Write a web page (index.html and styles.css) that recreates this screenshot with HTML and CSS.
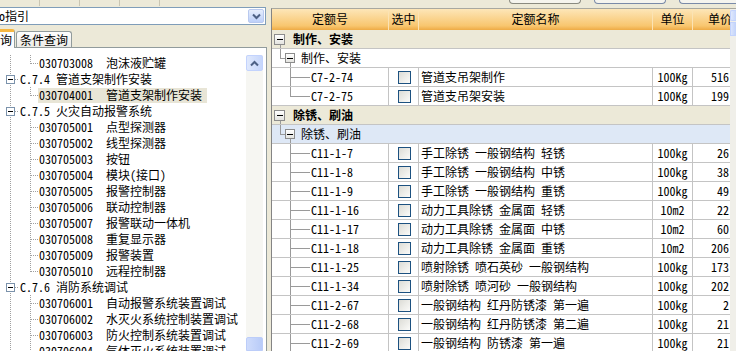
FILE: index.html
```html
<!DOCTYPE html>
<html lang="zh-CN">
<head>
<meta charset="utf-8">
<title>定额指引</title>
<link rel="stylesheet" href="styles.css">
</head>
<body>
<div class="app">
  <div class="left">
    <div class="ltop"><span class="tb"></span><span class="tb"></span><span class="tb"></span><span class="tb"></span></div>
    <div class="combo">
      <span class="combo-text">o指引</span>
      <span class="combo-btn"><svg width="9" height="7" viewBox="0 0 9 7"><path d="M1 1.5 L4.5 5 L8 1.5" fill="none" stroke="#4d6185" stroke-width="2"/></svg></span>
    </div>
    <div class="tabs">
      <span class="tab active">询</span>
      <span class="tab">条件查询</span>
      <span class="tabfill"></span>
    </div>
    <div class="tabpage">
      <div class="tree">
        <div class="tree-items">
          <div class="trow"><span class="l0"></span><span class="l1 last"></span><span class="code">030703008</span><span class="name">泡沫液贮罐</span></div>
          <div class="trow"><span class="l0 haschild"><span class="tbox"></span></span><span class="ptext">C.7.4 管道支架制作安装</span></div>
          <div class="trow"><span class="l0"></span><span class="l1 last"></span><span class="sel"><span class="code">030704001</span><span class="name">管道支架制作安装</span></span></div>
          <div class="trow"><span class="l0 haschild"><span class="tbox"></span></span><span class="ptext">C.7.5 火灾自动报警系统</span></div>
          <div class="trow"><span class="l0"></span><span class="l1"></span><span class="code">030705001</span><span class="name">点型探测器</span></div>
          <div class="trow"><span class="l0"></span><span class="l1"></span><span class="code">030705002</span><span class="name">线型探测器</span></div>
          <div class="trow"><span class="l0"></span><span class="l1"></span><span class="code">030705003</span><span class="name">按钮</span></div>
          <div class="trow"><span class="l0"></span><span class="l1"></span><span class="code">030705004</span><span class="name">模块(接口)</span></div>
          <div class="trow"><span class="l0"></span><span class="l1"></span><span class="code">030705005</span><span class="name">报警控制器</span></div>
          <div class="trow"><span class="l0"></span><span class="l1"></span><span class="code">030705006</span><span class="name">联动控制器</span></div>
          <div class="trow"><span class="l0"></span><span class="l1"></span><span class="code">030705007</span><span class="name">报警联动一体机</span></div>
          <div class="trow"><span class="l0"></span><span class="l1"></span><span class="code">030705008</span><span class="name">重复显示器</span></div>
          <div class="trow"><span class="l0"></span><span class="l1"></span><span class="code">030705009</span><span class="name">报警装置</span></div>
          <div class="trow"><span class="l0"></span><span class="l1 last"></span><span class="code">030705010</span><span class="name">远程控制器</span></div>
          <div class="trow"><span class="l0 haschild"><span class="tbox"></span></span><span class="ptext">C.7.6 消防系统调试</span></div>
          <div class="trow"><span class="l0"></span><span class="l1"></span><span class="code">030706001</span><span class="name">自动报警系统装置调试</span></div>
          <div class="trow"><span class="l0"></span><span class="l1"></span><span class="code">030706002</span><span class="name">水灭火系统控制装置调试</span></div>
          <div class="trow"><span class="l0"></span><span class="l1"></span><span class="code">030706003</span><span class="name">防火控制系统装置调试</span></div>
          <div class="trow"><span class="l0"></span><span class="l1"></span><span class="code">030706004</span><span class="name">气体灭火系统装置调试</span></div>
        </div>
        <div class="vscroll">
          <span class="sbtn"><svg width="9" height="7" viewBox="0 0 9 7"><path d="M1 5.5 L4.5 2 L8 5.5" fill="none" stroke="#4d6185" stroke-width="2"/></svg></span>
          <span class="strack"></span>
          <span class="sthumb"></span>
        </div>
      </div>
    </div>
  </div>
  <div class="splitter"></div>
  <div class="right">
    <div class="rtop"><span class="rb rb1"></span><span class="rb rb2"></span><span class="rb rb3"></span></div>
    <div class="grid">
      <div class="gtable">
        <div class="ghead">
          <span class="hc">定额号</span>
          <span class="hc">选中</span>
          <span class="hc">定额名称</span>
          <span class="hc">单位</span>
          <span class="hc">单价</span>
        </div>
        <div class="grow group"><span class="gbox"></span><span class="gtitle">制作、安装</span></div>
        <div class="grow sub"><span class="gbox small"></span><span class="stitle">制作、安装</span></div>
        <div class="grow data"><span class="c1"><span class="dl"></span>C7-2-74</span><span class="c2"><span class="chk"></span></span><span class="c3">管道支吊架制作</span><span class="c4">100Kg</span><span class="c5">516</span></div>
        <div class="grow data"><span class="c1"><span class="dl last"></span>C7-2-75</span><span class="c2"><span class="chk"></span></span><span class="c3">管道支吊架安装</span><span class="c4">100Kg</span><span class="c5">199</span></div>
        <div class="grow group"><span class="gbox"></span><span class="gtitle">除锈、刷油</span></div>
        <div class="grow sub cur"><span class="gbox small"></span><span class="stitle">除锈、刷油</span></div>
        <div class="grow data"><span class="c1"><span class="dl"></span>C11-1-7</span><span class="c2"><span class="chk"></span></span><span class="c3">手工除锈 一般钢结构 轻锈</span><span class="c4">100kg</span><span class="c5">26</span></div>
        <div class="grow data"><span class="c1"><span class="dl"></span>C11-1-8</span><span class="c2"><span class="chk"></span></span><span class="c3">手工除锈 一般钢结构 中锈</span><span class="c4">100kg</span><span class="c5">38</span></div>
        <div class="grow data"><span class="c1"><span class="dl"></span>C11-1-9</span><span class="c2"><span class="chk"></span></span><span class="c3">手工除锈 一般钢结构 重锈</span><span class="c4">100kg</span><span class="c5">49</span></div>
        <div class="grow data"><span class="c1"><span class="dl"></span>C11-1-16</span><span class="c2"><span class="chk"></span></span><span class="c3">动力工具除锈 金属面 轻锈</span><span class="c4">10m2</span><span class="c5">22</span></div>
        <div class="grow data"><span class="c1"><span class="dl"></span>C11-1-17</span><span class="c2"><span class="chk"></span></span><span class="c3">动力工具除锈 金属面 中锈</span><span class="c4">10m2</span><span class="c5">60</span></div>
        <div class="grow data"><span class="c1"><span class="dl"></span>C11-1-18</span><span class="c2"><span class="chk"></span></span><span class="c3">动力工具除锈 金属面 重锈</span><span class="c4">10m2</span><span class="c5">206</span></div>
        <div class="grow data"><span class="c1"><span class="dl"></span>C11-1-25</span><span class="c2"><span class="chk"></span></span><span class="c3">喷射除锈 喷石英砂 一般钢结构</span><span class="c4">100kg</span><span class="c5">173</span></div>
        <div class="grow data"><span class="c1"><span class="dl"></span>C11-1-34</span><span class="c2"><span class="chk"></span></span><span class="c3">喷射除锈 喷河砂 一般钢结构</span><span class="c4">100kg</span><span class="c5">202</span></div>
        <div class="grow data"><span class="c1"><span class="dl"></span>C11-2-67</span><span class="c2"><span class="chk"></span></span><span class="c3">一般钢结构 红丹防锈漆 第一遍</span><span class="c4">100kg</span><span class="c5">2</span></div>
        <div class="grow data"><span class="c1"><span class="dl"></span>C11-2-68</span><span class="c2"><span class="chk"></span></span><span class="c3">一般钢结构 红丹防锈漆 第二遍</span><span class="c4">100kg</span><span class="c5">21</span></div>
        <div class="grow data"><span class="c1"><span class="dl"></span>C11-2-69</span><span class="c2"><span class="chk"></span></span><span class="c3">一般钢结构 防锈漆 第一遍</span><span class="c4">100kg</span><span class="c5">21</span></div>
      </div>
      <div class="gscroll"><span class="gs-up"></span><span class="gs-thumb"></span></div>
    </div>
  </div>
</div>
</body>
</html>
```

FILE: styles.css
```css
* { box-sizing: border-box; }
html, body { margin: 0; padding: 0; }
body {
  width: 736px;
  height: 351px;
  overflow: hidden;
  background: #ece9d8;
  color: #000;
  font-family: "Noto Sans Mono CJK SC", "Noto Sans CJK SC", monospace;
  font-size: 12px;
  line-height: 16px;
}
.app { display: flex; height: 351px; }

/* ---------- left panel ---------- */
.left { width: 267px; display: flex; flex-direction: column; }
.ltop { height: 7px; display: flex; }
.tb { width: 40px; height: 6px; border-right: 1px solid #c9c5b3; }
.combo {
  height: 18px;
  display: flex;
  align-items: center;
  background: #fff;
  border: 1px solid #7f9db9;
  border-left: none;
  margin-right: 1px;
}
.combo-text { flex: 1; white-space: nowrap; overflow: hidden; margin-left: -1px; }
.combo-btn {
  width: 16px; height: 14px; margin-right: 1px;
  display: flex; align-items: center; justify-content: center;
  border: 1px solid #b9c9ef; border-radius: 2px;
  background: linear-gradient(#e6eefc, #bdd0f9);
}
.tabs { height: 22px; display: flex; align-items: flex-end; }
.tab {
  height: 16px;
  padding: 0 3px;
  border: 1px solid #919b9c;
  border-bottom: none;
  border-radius: 3px 3px 0 0;
  background: linear-gradient(#fefefe, #ecebe6);
  line-height: 15px;
  margin-left: 1px;
}
.tab.active {
  height: 19px;
  margin-left: 0;
  padding: 0 2px 0 0;
  border-left: none;
  border-top: 3px solid #f6b741;
  border-radius: 0 3px 0 0;
  background: #fcfcfe;
  line-height: 15px;
  position: relative;
  z-index: 1;
  margin-bottom: -1px;
}
.tabfill { flex: 1; }
.tabpage {
  flex: 1;
  background: #fff;
  border-top: 1px solid #919b9c;
  border-right: 1px solid #919b9c;
  padding-top: 6px;
  min-height: 0;
}
.tree { display: flex; height: 100%; }
.tree-items { flex: 1; overflow: hidden; padding-top: 1px; }
.trow { height: 16px; display: flex; align-items: center; white-space: nowrap; }
.l0, .l1 { height: 16px; flex: none; }
.l0 {
  width: 20px;
  background: repeating-linear-gradient(#a0a0a0 0 1px, transparent 1px 2px) 10px 0 / 1px 16px no-repeat;
}
.l0.haschild {
  display: flex; align-items: center; padding-left: 6px;
  background:
    repeating-linear-gradient(#a0a0a0 0 1px, transparent 1px 2px) 10px 0 / 1px 16px no-repeat,
    repeating-linear-gradient(90deg, #a0a0a0 0 1px, transparent 1px 2px) 15px 8px / 4px 1px no-repeat;
}
.tbox {
  width: 9px; height: 9px;
  border: 1px solid #7b92ab;
  background: #fff linear-gradient(#000, #000) center / 5px 1px no-repeat;
}
.l1 {
  width: 19px;
  background:
    repeating-linear-gradient(#a0a0a0 0 1px, transparent 1px 2px) 10px 0 / 1px 16px no-repeat,
    repeating-linear-gradient(90deg, #a0a0a0 0 1px, transparent 1px 2px) 11px 8px / 8px 1px no-repeat;
}
.l1.last {
  background:
    repeating-linear-gradient(#a0a0a0 0 1px, transparent 1px 2px) 10px 0 / 1px 9px no-repeat,
    repeating-linear-gradient(90deg, #a0a0a0 0 1px, transparent 1px 2px) 11px 8px / 8px 1px no-repeat;
}
.code { width: 67px; flex: none; }
.ptext { white-space: pre; }
.sel { display: flex; background: #e8e5d6; padding: 0 5px 0 1px; height: 15px; align-items: center; margin-left: -1px; }
.vscroll {
  width: 17px; flex: none; margin-right: 3px; margin-top: 1px;
  display: flex; flex-direction: column; background: #f7f7f3;
}
.sbtn {
  height: 16px;
  display: flex; align-items: center; justify-content: center;
  border: 1px solid #c3d3fd; border-radius: 2px;
  background: linear-gradient(90deg, #e0e9fd, #c6d6fb);
}
.strack { flex: 1; background: #f6f6f2; }
.sthumb { height: 14px; border: 1px solid #bccdf9; border-radius: 2px 2px 0 0; background: linear-gradient(90deg, #cfdcfc, #b8cbf8); }

.splitter { width: 3px; }

/* ---------- right panel ---------- */
.right { flex: 1; display: flex; flex-direction: column; padding-left: 1px; min-width: 0; }
.rtop { height: 8px; display: flex; padding-left: 238px; gap: 13px; }
.rb { height: 4px; border: 1px solid #7a8aa8; border-top: none; border-radius: 0 0 4px 4px; background: #f5f4ee; }
.rb1 { width: 72px; border-color: #8a8a80; }
.rb2 { width: 72px; }
.rb3 { flex: 1; border-right: none; border-radius: 0 0 0 4px; }
.grid { flex: 1; display: flex; border-left: 1px solid #848484; border-top: 1px solid #a8a8a0; background: #fff; min-height: 0; }
.gtable { width: 458px; flex: none; overflow: hidden; }
.ghead, .grow.data {
  display: grid;
  grid-template-columns: 117px 30px 234px 40px 37px;
}
.ghead {
  height: 21px;
  background: linear-gradient(#fde6b8, #f8c66f 80%, #eeab45);
}
.hc {
  text-align: center;
  line-height: 20px;
  border-right: 1px solid #fbe3b4;
  white-space: nowrap;
  overflow: hidden;
}
.hc:last-child { border-right: none; text-align: left; padding-left: 15px; }
.grow { height: 19px; border-bottom: 1px solid #c4c4c4; white-space: nowrap; }
.grow.group, .grow.sub { display: flex; align-items: center; }
.gbox {
  width: 11px; height: 11px; flex: none;
  border: 1px solid #8c8c8c;
  background: linear-gradient(#000, #000) center / 6px 1px no-repeat, linear-gradient(#fff, #e4e4e0);
}
.gtitle { font-weight: bold; margin-left: 8px; }
.grow.group {
  padding-left: 2px;
  background:
    linear-gradient(#9a9a9a, #9a9a9a) 8px 13px / 1px 6px no-repeat,
    #ece9d8;
}
.grow.sub {
  background:
    linear-gradient(#9a9a9a, #9a9a9a) 8px 0 / 1px 9px no-repeat,
    linear-gradient(#9a9a9a, #9a9a9a) 8px 9px / 5px 1px no-repeat,
    linear-gradient(#9a9a9a, #9a9a9a) 18px 14px / 1px 5px no-repeat,
    #fff;
  padding-left: 13px;
}
.grow.sub.cur {
  background:
    linear-gradient(#9a9a9a, #9a9a9a) 8px 0 / 1px 9px no-repeat,
    linear-gradient(#9a9a9a, #9a9a9a) 8px 9px / 5px 1px no-repeat,
    linear-gradient(#9a9a9a, #9a9a9a) 18px 14px / 1px 5px no-repeat,
    #dee8f6;
}
.gbox.small { width: 10px; height: 10px; }
.stitle { margin-left: 6px; }
.grow.data > span { border-right: 1px solid #c4c4c4; height: 18px; line-height: 18px; overflow: hidden; }
.grow.data > span:last-child { border-right: none; }
.c1 { display: flex; }
.dl {
  width: 39px; flex: none;
  background:
    linear-gradient(#9a9a9a, #9a9a9a) 18px 0 / 1px 18px no-repeat,
    linear-gradient(#9a9a9a, #9a9a9a) 19px 9px / 19px 1px no-repeat;
}
.dl.last {
  background:
    linear-gradient(#9a9a9a, #9a9a9a) 18px 0 / 1px 10px no-repeat,
    linear-gradient(#9a9a9a, #9a9a9a) 19px 9px / 19px 1px no-repeat;
}
.c2 { display: flex; align-items: center; padding-left: 9px; }
.chk {
  width: 13px; height: 13px;
  border: 1px solid #1c5180;
  background: linear-gradient(135deg, #dcdcd6, #fbfbf9);
}
.c3 { padding-left: 2px; }
.c4 { text-align: center; }
.c5 { text-align: right; padding-right: 1px; }
.gscroll { flex: 1; background: #f0efe9; display: flex; flex-direction: column; }
.gs-up { height: 11px; margin-top: 1px; border: 1px solid #c3d3fd; border-right: none; border-radius: 2px 0 0 2px; background: linear-gradient(90deg, #e0e9fd, #c6d6fb); }
.gs-thumb { height: 14px; margin-top: 1px; border: 1px solid #c3d3fd; border-right: none; background: linear-gradient(90deg, #dbe5fc, #c1d2fa); }
```
